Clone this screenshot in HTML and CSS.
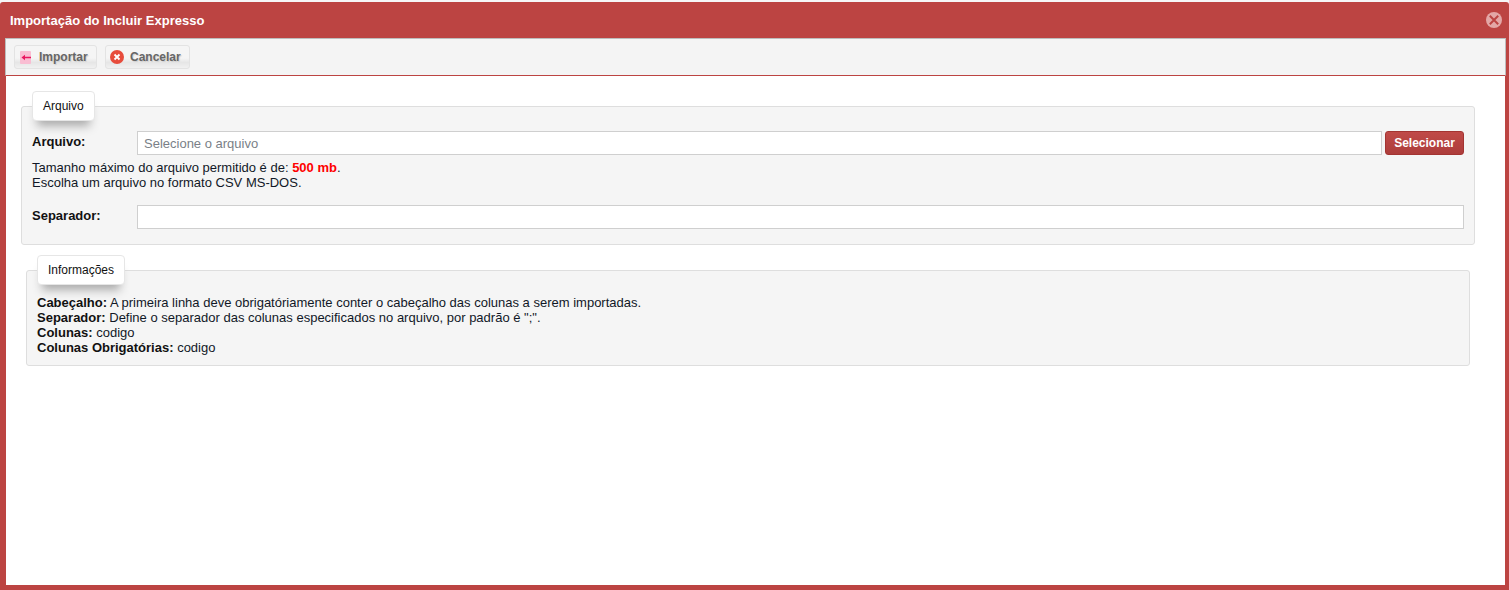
FILE: index.html
```html
<!DOCTYPE html>
<html lang="pt-BR">
<head>
<meta charset="utf-8">
<title>Importação do Incluir Expresso</title>
<link rel="stylesheet" href="styles.css">
</head>
<body>
<div class="window">
  <header class="titlebar">
    <span class="title">Importação do Incluir Expresso</span>
    <svg class="close" width="16" height="16" viewBox="0 0 16 16"><circle cx="8" cy="8" r="8" fill="#e3a7a6"/><path d="M3.800 3.800l8.400 8.400M12.200 3.800l-8.400 8.400" stroke="#bc4442" stroke-width="2" fill="none"/></svg>
  </header>
  <div class="panel">
    <nav class="toolbar">
      <button class="tool" type="button">
        <svg class="ico-import" width="11" height="13" viewBox="0 0 11 13"><rect width="11" height="13" rx="1" fill="#f9bdd2"/><path d="M4 6.500h7" stroke="#e9165f" stroke-width="1.500" fill="none"/><path d="M1.500 6.500L5 3.800v5.400z" fill="#e9165f"/></svg>
        Importar
      </button>
      <button class="tool tool-cancel" type="button">
        <svg width="14" height="14" viewBox="0 0 14 14"><circle cx="7" cy="7" r="7" fill="#e74c3c"/><path d="M4.500 4.500l5 5M9.500 4.500l-5 5" stroke="#fff" stroke-width="1.800" fill="none"/></svg>
        Cancelar
      </button>
    </nav>
    <main class="content">
      <section class="box box-file">
        <div class="legend">Arquivo</div>
        <div class="row">
          <label class="label">Arquivo:</label>
          <input class="field" type="text" placeholder="Selecione o arquivo">
          <button class="select" type="button">Selecionar</button>
        </div>
        <p class="hint">Tamanho máximo do arquivo permitido é de: <b class="limit">500 mb</b>.<br>Escolha um arquivo no formato CSV MS-DOS.</p>
        <div class="row">
          <label class="label">Separador:</label>
          <input class="field" type="text">
        </div>
      </section>
      <section class="box box-info">
        <div class="legend">Informações</div>
        <div class="info">
          <div><b>Cabeçalho:</b> A primeira linha deve obrigatóriamente conter o cabeçalho das colunas a serem importadas.</div>
          <div><b>Separador:</b> Define o separador das colunas especificados no arquivo, por padrão é ";".</div>
          <div><b>Colunas:</b> codigo</div>
          <div><b>Colunas Obrigatórias:</b> codigo</div>
        </div>
      </section>
    </main>
  </div>
</div>
</body>
</html>
```
FILE: styles.css
```css
* { box-sizing: border-box; }
html, body { margin: 0; height: 100%; overflow: hidden; }
body {
  background: #f6f6f6;
  padding-top: 2px;
  font-family: "Liberation Sans", Arial, sans-serif;
  font-size: 13px;
  color: #111827;
}
.window {
  height: 588px;
  background: #bc4442;
  border-radius: 3px 3px 0 0;
  padding: 0 3px 5px 5px;
  display: flex;
  flex-direction: column;
}
.titlebar {
  height: 36px;
  flex: none;
  display: flex;
  align-items: center;
  justify-content: space-between;
  padding: 0 4px 0 5px;
}
.title { color: #fff; font-weight: 700; font-size: 13px; }
.close { display: block; }
.panel { flex: 1; display: flex; flex-direction: column; min-height: 0; }
.toolbar {
  height: 38px;
  flex: none;
  background: #f4f4f4;
  border: 1px solid #bdbdbd;
  border-bottom: 1px solid #bc4442;
  padding: 6px 8px;
  display: flex;
  gap: 8px;
}
.tool {
  width: 83px;
  height: 24px;
  padding: 0 0 0 5px;
  display: flex;
  align-items: center;
  gap: 8px;
  border: 1px solid #e3e3e3;
  border-radius: 3px;
  background: linear-gradient(#f5f5f5 55%, #e6e6e6 75%, #f1f1f1);
  color: #666;
  font: 700 12px "Liberation Sans", Arial, sans-serif;
  text-shadow: 1px 1px 1px #cfcfcf;
}
.tool-cancel { width: 85px; gap: 6px; padding-left: 4px; }
.content { flex: 1; margin: 0 1px; background: #fff; padding: 30px 0 0; }
.box {
  background: #f5f5f5;
  border: 1px solid #dedede;
  border-radius: 3px;
}
.box-file { margin: 0 30px 0 15px; height: 139px; padding: 0 10px; }
.box-info { margin: 25px 35px 0 20px; height: 96px; padding: 0 10px; }
.legend {
  display: table;
  height: 30px;
  line-height: 28px;
  margin: -16px 0 0;
  padding: 0 10px;
  background: #fff;
  border: 1px solid #e6e6e6;
  border-radius: 4px;
  font-size: 12px;
  color: #111;
  box-shadow: 0 10px 10px -5px #aaa;
}
.row { display: flex; align-items: flex-start; margin-top: 10px; }
.label { width: 105px; flex: none; font-weight: 700; font-size: 13px; line-height: 22px; color: #111; }
.field {
  flex: 1;
  min-width: 0;
  height: 24px;
  padding: 0 6px;
  background: #fff;
  border: 1px solid #cfcfcf;
  font: 13px "Liberation Sans", Arial, sans-serif;
  outline: none;
}
.field::placeholder { color: #7a7f87; opacity: 1; }
.select {
  width: 79px;
  height: 24px;
  margin-left: 3px;
  flex: none;
  padding: 0;
  border: 1px solid #a33432;
  border-radius: 3px;
  background: linear-gradient(#c04a48, #ad3d3b);
  color: #fff;
  font: 700 12px "Liberation Sans", Arial, sans-serif;
}
.hint { margin: 5px 0 0; line-height: 15px; }
.hint + .row { margin-top: 15px; }
.limit { color: #f00; }
.info { margin-top: 10px; line-height: 15px; }
.info b { color: #111; }
```
